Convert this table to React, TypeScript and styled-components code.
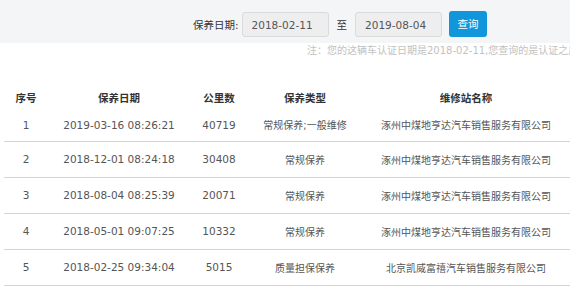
import React from 'react';
import styled, { createGlobalStyle } from 'styled-components';

type Record = {
  id: number;
  date: string;
  km: string;
  kind: string;
  station: string;
};

const records: Record[] = [
  { id: 1, date: '2019-03-16 08:26:21', km: '40719', kind: '常规保养;一般维修', station: '涿州中煤地亨达汽车销售服务有限公司' },
  { id: 2, date: '2018-12-01 08:24:18', km: '30408', kind: '常规保养', station: '涿州中煤地亨达汽车销售服务有限公司' },
  { id: 3, date: '2018-08-04 08:25:39', km: '20071', kind: '常规保养', station: '涿州中煤地亨达汽车销售服务有限公司' },
  { id: 4, date: '2018-05-01 09:07:25', km: '10332', kind: '常规保养', station: '涿州中煤地亨达汽车销售服务有限公司' },
  { id: 5, date: '2018-02-25 09:34:04', km: '5015', kind: '质量担保保养', station: '北京凯威富禧汽车销售服务有限公司' },
];

const GlobalStyle = createGlobalStyle`
  body {
    margin: 0;
    overflow: hidden;
    background: #fff;
    font-family: "DejaVu Sans", "Noto Sans CJK SC", sans-serif;
  }
`;

// 상단 검색 영역
const SearchBar = styled.div`
  height: 43px;
  box-sizing: border-box;
  padding-top: 6px;
  background: #f4f5f7;
  display: flex;
  align-items: center;
  padding-left: 193px;
`;

const Label = styled.span`
  font-size: 10.5px;
  color: #333;
  margin-right: 3px;
`;

const DateInput = styled.div`
  width: 87px;
  height: 25px;
  box-sizing: border-box;
  border: 1px solid #dadada;
  border-radius: 3px;
  background: #eeeeee;
  color: #555;
  font-size: 10.5px;
  display: flex;
  align-items: center;
  padding-left: 9px;
`;

const To = styled.span`
  font-size: 10.5px;
  color: #333;
  margin: 0 8px;
`;

const QueryButton = styled.button`
  margin-left: 7px;
  margin-top: -2px;
  width: 38px;
  height: 26px;
  border: none;
  border-radius: 3px;
  background: #1296db;
  color: #fff;
  font-family: inherit;
  font-size: 10.5px;
  padding: 0;
`;

// 안내 문구 (오른쪽 끝에서 잘림)
const Note = styled.div`
  height: 15px;
  line-height: 15px;
  padding-left: 307px;
  white-space: nowrap;
  overflow: hidden;
  font-size: 10px;
  color: #c2c2c2;
`;

const Table = styled.table`
  margin: 27px 0 0 4px;
  width: 566px;
  border-collapse: collapse;
  table-layout: fixed;
`;

const Th = styled.th<{ $w: number }>`
  width: ${(p) => p.$w}px;
  height: 24px;
  padding: 0;
  font-size: 10.5px;
  font-weight: bold;
  color: #333;
  text-align: center;
`;

const Row = styled.tr<{ $first?: boolean }>`
  height: ${(p) => (p.$first ? 32 : 36)}px;
  border-bottom: 1px solid #d4d4d4;
`;

const Td = styled.td<{ $num?: boolean }>`
  padding: 0;
  text-align: center;
  white-space: nowrap;
  color: #555;
  font-size: ${(p) => (p.$num ? 10.5 : 10)}px;
`;

const columns = [
  { title: '序号', w: 44 },
  { title: '保养日期', w: 142 },
  { title: '公里数', w: 58 },
  { title: '保养类型', w: 114 },
  { title: '维修站名称', w: 208 },
];

export default function App() {
  return (
    <>
      <GlobalStyle />
      <SearchBar>
        <Label>保养日期:</Label>
        <DateInput>2018-02-11</DateInput>
        <To>至</To>
        <DateInput>2019-08-04</DateInput>
        <QueryButton>查询</QueryButton>
      </SearchBar>
      <Note>注：您的这辆车认证日期是2018-02-11,您查询的是认证之后的保养记录</Note>
      <Table>
        <thead>
          <tr>
            {columns.map((c) => (
              <Th key={c.title} $w={c.w}>
                {c.title}
              </Th>
            ))}
          </tr>
        </thead>
        <tbody>
          {records.map((r, i) => (
            <Row key={r.id} $first={i === 0}>
              <Td $num>{r.id}</Td>
              <Td $num>{r.date}</Td>
              <Td $num>{r.km}</Td>
              <Td>{r.kind}</Td>
              <Td>{r.station}</Td>
            </Row>
          ))}
        </tbody>
      </Table>
    </>
  );
}
